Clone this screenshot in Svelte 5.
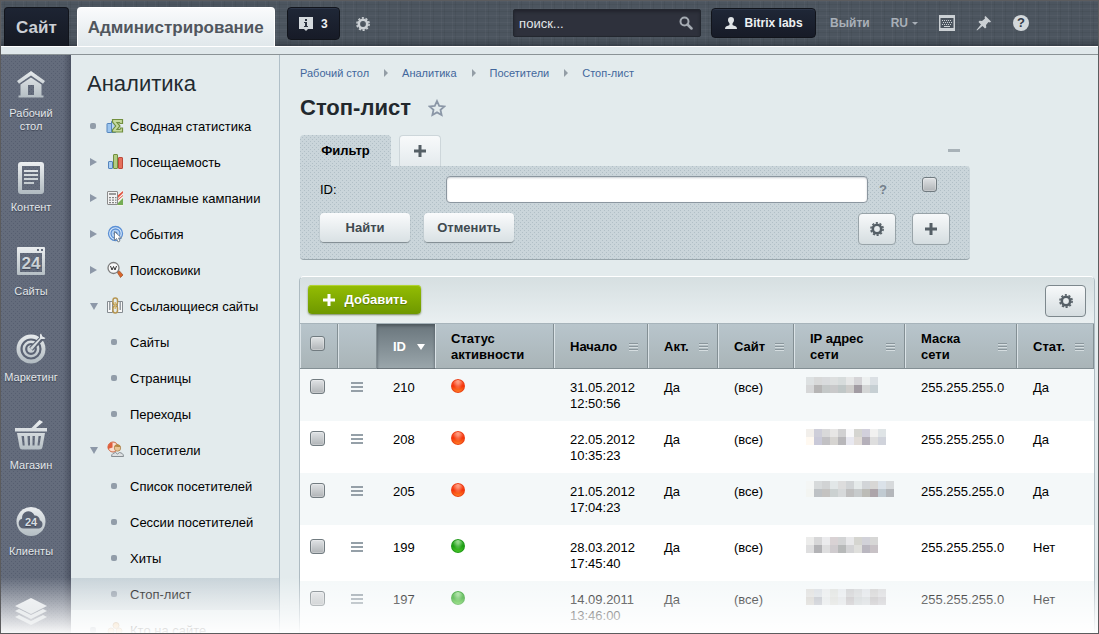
<script>
  const rail = [
    { icon: "home", label: "Рабочий стол" },
    { icon: "content", label: "Контент" },
    { icon: "sites", label: "Сайты" },
    { icon: "marketing", label: "Маркетинг" },
    { icon: "shop", label: "Магазин" },
    { icon: "clients", label: "Клиенты" },
    { icon: "apps", label: "" }
  ];

  const menu = [
    { label: "Сводная статистика", icon: "summary", mark: "dot" },
    { label: "Посещаемость", icon: "traffic", mark: "right" },
    { label: "Рекламные кампании", icon: "ads", mark: "right" },
    { label: "События", icon: "events", mark: "right" },
    { label: "Поисковики", icon: "search", mark: "right" },
    { label: "Ссылающиеся сайты", icon: "links", mark: "down" },
    { label: "Сайты", sub: true },
    { label: "Страницы", sub: true },
    { label: "Переходы", sub: true },
    { label: "Посетители", icon: "visitors", mark: "down" },
    { label: "Список посетителей", sub: true },
    { label: "Сессии посетителей", sub: true },
    { label: "Хиты", sub: true },
    { label: "Стоп-лист", sub: true, active: true },
    { label: "Кто на сайте", icon: "online", mark: "dot" }
  ];

  const crumbs = ["Рабочий стол", "Аналитика", "Посетители", "Стоп-лист"];

  const columns = [
    { title: "Начало" },
    { title: "Акт." },
    { title: "Сайт" },
    { title: "IP адрес сети" },
    { title: "Маска сети" },
    { title: "Стат." }
  ];

  // the address is hidden behind two lines of coloured squares
  const rows = [
    {
      id: 210, state: "red", date: "31.05.2012", time: "12:50:56", stat: "Да",
      ip: [
        ["#dde1e2", "#d8d9d9", "#d9dbdd", "#dddfdf", "#d7dcdc", "#e6e7e7", "#d5d4d7", "#edf0f0", "#dbe0e4"],
        ["#d6d7d8", "#b6b5b5", "#c4c8c8", "#c9c9ca", "#c0c7c7", "#cecdcb", "#a29ca3", "#d4d6d6", "#c6cfd3"]
      ]
    },
    {
      id: 208, state: "red", date: "22.05.2012", time: "10:35:23", stat: "Да",
      ip: [
        ["#f2efeb", "#ceced9", "#d9d9da", "#e7e6e5", "#d1d1d2", "#f8f8fa", "#d5d5d1", "#d2d0dc", "#f1f1f0", "#dfe4e6"],
        ["#fff9f1", "#c9c9d8", "#c2c1c4", "#d6d4d1", "#b8b7ba", "#e8e8f0", "#e1dcd8", "#b5b0ba", "#dedede", "#d0d3db"]
      ]
    },
    {
      id: 205, state: "red", date: "21.05.2012", time: "17:04:23", stat: "Да",
      ip: [
        ["#f4f6f5", "#d7dadb", "#d1d3d4", "#e2e7e8", "#dddddd", "#d1d4d6", "#e5eaea", "#d2d5d8", "#d8d7d5", "#dbe2e9", "#d7dadc"],
        ["#f3f5f2", "#bec2c5", "#c4c3c1", "#cbd1d1", "#d6d9da", "#bfbfbf", "#c7cbcc", "#bcbcb7", "#ada5aa", "#c1cbd2", "#b4b7bb"]
      ]
    },
    {
      id: 199, state: "green", date: "28.03.2012", time: "17:45:40", stat: "Нет", tall: true,
      ip: [
        ["#ececeb", "#d7d7d8", "#ebebed", "#d9d2d4", "#d3d4d5", "#e8e8ea", "#d5d5d0", "#d2d2d9", "#d7d7d6"],
        ["#dededf", "#b3b3b6", "#dededf", "#cfcbce", "#b7b9b9", "#d3d3d5", "#dfdfdc", "#bab7c0", "#c8c2c6"]
      ]
    },
    {
      id: 197, state: "green", date: "14.09.2011", time: "13:46:00", stat: "Нет",
      ip: [
        ["#dededc", "#d8dde2", "#e8ebec", "#dfe2df", "#e6eaed", "#cecfd1", "#d5d8da", "#e0e4e8", "#d2d2d2", "#dadbdd"],
        ["#d2d0cb", "#b7bbc4", "#e2e6e7", "#dadcd8", "#dde1e3", "#bfbcbf", "#cbd1d3", "#d1d6d9", "#bfbdbf", "#c9c8cc"]
      ]
    }
  ];
</script>

<svelte:head>
  <title>Стоп-лист</title>
</svelte:head>

{#snippet gear()}
  <svg class="gear" viewBox="0 0 14 14" width="14" height="14">
    <circle cx="7" cy="7" r="4.2" fill="none" stroke="currentColor" stroke-width="2.6" />
    <circle cx="7" cy="7" r="6.1" fill="none" stroke="currentColor" stroke-width="1.6" stroke-dasharray="2.1 1.73" />
  </svg>
{/snippet}

{#snippet plus()}
  <svg viewBox="0 0 14 14" width="14" height="14">
    <path d="M5.5 1h3v4.5H13v3H8.500V13h-3V8.500H1v-3h4.500z" fill="currentColor" />
  </svg>
{/snippet}

{#snippet railIcon(name)}
  <svg viewBox="0 0 32 32" width="32" height="32" fill="url(#metal)">
    {#if name === "home"}
      <path d="M2 13 16 3l14 10-2 2.800L16 7.400 4 15.800z" />
      <path fill-rule="evenodd" d="M5.500 16.500 16 9.400l10.500 7.100V27.500h2V29.500h-25v-2h2zM13 17v10h6V17z" />
    {:else if name === "content"}
      <path fill-rule="evenodd" d="M6 0h20a3 3 0 0 1 3 3v26a3 3 0 0 1-3 3H6a3 3 0 0 1-3-3V3a3 3 0 0 1 3-3zm1 4v24h18V4z" />
      <path d="M9 8h14v2H9zm0 4h14v2H9zm0 4h14v2H9zm0 4h10v2H9z" />
    {:else if name === "sites"}
      <path fill-rule="evenodd" d="M3 1h26a1 1 0 0 1 1 1v26a1 1 0 0 1-1 1H3a1 1 0 0 1-1-1V2a1 1 0 0 1 1-1zm19 2v2h2V3zm4 0v2h2V3zM5 7v19h22V7z" />
      <text x="16" y="23" text-anchor="middle" font-size="17" font-weight="700">24</text>
    {:else if name === "marketing"}
      <circle cx="16" cy="17" r="14.500" />
      <g fill="none" stroke="#5b6374" stroke-width="2.200">
        <circle cx="16" cy="17" r="9.500" />
        <circle cx="16" cy="17" r="4.800" />
        <path d="m16 17 13-13" stroke-width="5" />
      </g>
      <path d="m15 16 10-10V2.500l1-1 1.500 3 3 1.500-1 1H26L17 18z" />
    {:else if name === "shop"}
      <path d="M24.500 0 28 2l-7 6h-4.500z" />
      <path d="M0 8h32v3.500H0z" />
      <path fill-rule="evenodd" d="M2 13h28l-2.500 14a3 3 0 0 1-3 2.500h-17a3 3 0 0 1-3-2.500zm4.500 3 1.200 9.500h2L9 16zm6 0 .5 9.500h2V16zm5 0v9.500h2l.5-9.500zm6 0-1 9.500h2l1.500-9.500z" />
    {:else if name === "clients"}
      <circle cx="16" cy="15.500" r="14.500" />
      <path d="M8.500 22.500a5 5 0 0 1-1.500-9.700 6.500 6.500 0 0 1 12.500-3.300 5 5 0 0 1 5.300 4.800 4.300 4.300 0 0 1-.8 8.200z" fill="#5b6374" />
      <text x="16" y="20" text-anchor="middle" font-size="11" font-weight="700" fill="#d8dee2">24</text>
    {:else}
      <path d="m16 2 16 8-16 8-16-8z" />
      <path d="m0 15 4-2 12 6 12-6 4 2-16 8z" />
      <path d="m0 21 4-2 12 6 12-6 4 2-16 8z" />
    {/if}
  </svg>
{/snippet}

{#snippet menuIcon(name)}
  <svg viewBox="0 0 18 18" width="18" height="18">
    {#if name === "summary"}
      <rect x="1" y="6.500" width="4.500" height="9" rx=".5" fill="#9cc5ee" stroke="#5585bd" />
      <path d="M5.500 4.500h4v11h-4z" fill="#b7d4f2" stroke="#5585bd" />
      <path d="M6.500 2.500h10v4h-2.500l-.5-1H11l3 3.500-3 3.500h3l.5-1.500h2v4h-10v-2l3.200-4L6.500 5z" fill="#c6da9f" stroke="#718f3e" stroke-width="1.200" />
    {:else if name === "traffic"}
      <rect x="2.500" y="8.500" width="4" height="7" rx=".5" fill="#a9cdf1" stroke="#5585bd" />
      <rect x="7.500" y="1.500" width="4" height="14" rx=".5" fill="#b2cd83" stroke="#718f3e" />
      <rect x="12.500" y="4.500" width="4" height="11" rx=".5" fill="#e5705c" stroke="#bd4a3b" />
    {:else if name === "ads"}
      <path d="M11 6 17 1v16h-6z" fill="#f7f3ee" />
      <path d="m11 7 6-5v2l-6 6zm0 5 6-5v-1l-6 5z" fill="#de5340" />
      <path d="m11 15 6-6v7h-6z" fill="#75ad54" />
      <rect x="1.500" y="2.500" width="10" height="13" rx=".5" fill="#f3f3f3" stroke="#8b8b8b" />
      <path d="M3 4h7v2H3z" fill="#9a9a9a" />
      <path d="M3 8h2v1.300H3zm3 0h2v1.300H6zm3 0h1.500v1.300H9zm-6 2.500h2v1.300H3zm3 0h2v1.300H6zm3 0h1.500v1.300H9zM3 13h2v1.300H3zm3 0h2v1.300H6zm3 0h1.500v1.300H9z" fill="#858585" />
    {:else if name === "events"}
      <circle cx="9.500" cy="8.500" r="7" fill="#d8e9fa" stroke="#5a8fd5" stroke-width="1.300" />
      <circle cx="9.500" cy="8.500" r="4.500" fill="#b5d2f3" stroke="#5a8fd5" stroke-width="1.300" />
      <circle cx="9.500" cy="8.500" r="2" fill="#4c83ca" />
      <path d="M8.500 6.500v9l2-2 1.500 3.500 2-1-1.500-3h3z" fill="#fff" stroke="#66717c" stroke-width=".8" />
    {:else if name === "search"}
      <path d="m11 11 2-1.500 4 4.500-2.500 2.500z" fill="#d9662b" stroke="#99502b" stroke-width=".7" />
      <circle cx="7.500" cy="7" r="5.500" fill="#f8f8f8" stroke="#7d7d7d" stroke-width="1.300" />
      <path d="m4.500 5 1.500 4 1.500-3.500L9 9l1.500-4" fill="none" stroke="#333" />
    {:else if name === "links"}
      <path d="M1.500 4.500h5v11h-5zm10 0h5v11h-5z" fill="#f8f8f8" stroke="#858b90" />
      <path d="M3 5h1.500v8H3zm10.500 0H15v8h-1.500z" fill="#989ea3" />
      <rect x="7" y="1" width="4.500" height="7" rx="2.200" fill="none" stroke="#b69550" stroke-width="1.500" />
      <rect x="7" y="9" width="4.500" height="7" rx="2.200" fill="none" stroke="#b69550" stroke-width="1.500" />
      <path d="M9.200 5v7" stroke="#d5b871" stroke-width="1.500" />
    {:else if name === "visitors"}
      <circle cx="7" cy="6" r="5" fill="#f9ddd0" stroke="#cf6742" />
      <path d="M6.500 1.500v5L2 8a5 5 0 0 1 4.500-6.500z" fill="#e15f3d" />
      <circle cx="11.500" cy="7" r="3.200" fill="#e9c392" stroke="#a98150" stroke-width=".8" />
      <path d="M8.300 6a3.200 3.200 0 0 1 6.300 0c-2 .3-4-.7-6.300 0z" fill="#b48744" />
      <path d="M5.500 15.500c0-3 2.500-3.500 4-4l2 1.500 2-1.500c2 .5 4 1 4 4z" fill="#dde0e2" stroke="#868d92" />
    {:else}
      <circle cx="10" cy="4.500" r="3" fill="#e9b772" stroke="#a98150" />
      <circle cx="5" cy="10" r="3" fill="#e9b772" stroke="#a98150" />
      <circle cx="13" cy="10" r="3" fill="#e9b772" stroke="#a98150" />
      <path d="M1 16c0-3 2-3.500 4-3.500S9 13 9 16zm8 0c0-3 2-3.500 4-3.500s4 .5 4 3.500z" fill="#c9a266" />
    {/if}
  </svg>
{/snippet}

<svg class="defs" width="0" height="0" aria-hidden="true">
  <linearGradient id="metal" x1="0" y1="0" x2="0" y2="32" gradientUnits="userSpaceOnUse">
    <stop offset="0" stop-color="#eceff1" />
    <stop offset="1" stop-color="#b0bac0" />
  </linearGradient>
</svg>

<div class="page">
  <header>
    <nav class="tabs">
      <a class="tab" href="#site">Сайт</a>
      <a class="tab current" href="#admin">Администрирование</a>
    </nav>
    <button class="dark notices" aria-label="Уведомления: 3">
      <svg viewBox="0 0 14 14" width="14" height="14">
        <path d="M0 0h14v12H9l-2 2-2-2H0z" fill="#d5dade" />
        <path d="M6 2h2v2H6zM5 5h3v4h1v1H5V9h1V6H5z" fill="#2c3340" />
      </svg>
      <span>3</span>
    </button>
    <button class="plain settings" aria-label="Настройки">{@render gear()}</button>

    <div class="search">
      <input type="text" placeholder="поиск..." aria-label="Поиск" />
      <svg viewBox="0 0 14 14" width="14" height="14">
        <circle cx="5.500" cy="5.500" r="4" fill="none" stroke="#a5abb2" stroke-width="2" />
        <path d="m8.500 8.500 4 4" stroke="#a5abb2" stroke-width="2.500" stroke-linecap="round" />
      </svg>
    </div>
    <button class="dark user">
      <svg viewBox="0 0 12 12" width="12" height="12">
        <path d="M6 0c2 0 3 1.200 3 3S8 5.500 7.500 6.500c0 1.500 0 1.500 1 2 2 .5 3.500 1 3.500 3.500H0c0-2.500 1.500-3 3.500-3.500 1-.5 1-.5 1-2C4 5.500 3 4.800 3 3s1-3 3-3z" fill="#dfe3e6" />
      </svg>
      <span>Bitrix labs</span>
    </button>
    <a class="link" href="#logout">Выйти</a>
    <button class="plain link lang">RU<i></i></button>
    <button class="plain tool" aria-label="Горячие клавиши">
      <svg viewBox="0 0 16 16" width="16" height="16">
        <path fill-rule="evenodd" d="M0 0h16v16H0zm1.500 3v10h13V3z" fill="#cbd0d4" />
        <path d="M3 5.500h10M3 9.500h10" stroke="#cbd0d4" stroke-dasharray="1 1" />
        <path d="M4 7.500h9" stroke="#cbd0d4" stroke-dasharray="1 1" />
        <path d="M5 11.500h6" stroke="#cbd0d4" />
      </svg>
    </button>
    <button class="plain tool" aria-label="Закрепить">
      <svg viewBox="0 0 16 16" width="16" height="16">
        <path d="m9.500 1 5.500 5.500-1 1-1.500-.5-2.500 3 .3 2.500-1.300 1L6.500 11 1 15.500.5 15 5 9.500 2.500 7l1-1.200L6 6l3-2.500L8.500 2z" fill="#cbd0d4" />
      </svg>
    </button>
    <button class="plain tool" aria-label="Помощь">
      <span class="help">?</span>
    </button>
  </header>

  <div class="band"></div>

  <div class="body">
    <nav class="rail">
      {#each rail as item}
        <a href="#{item.icon}" aria-label={item.label || "Приложения"}>
          {@render railIcon(item.icon)}
          <span>{item.label}</span>
        </a>
      {/each}
    </nav>

    <aside>
      <h2>Аналитика</h2>
      <ul>
        {#each menu as item}
          <li class:sub={item.sub} class:active={item.active}>
            <i class={item.mark || "dot"}></i>
            {#if item.icon}{@render menuIcon(item.icon)}{/if}
            <a href="#menu">{item.label}</a>
          </li>
        {/each}
      </ul>
    </aside>

    <main>
      <nav class="crumbs">
        {#each crumbs as crumb, i}
          {#if i > 0}<i></i>{/if}
          <a href="#crumb">{crumb}</a>
        {/each}
      </nav>

      <div class="title">
        <h1>Стоп-лист</h1>
        <button class="plain" aria-label="В избранное">
          <svg viewBox="0 0 18 18" width="18" height="18">
            <path d="m9 2 2.200 4.800 5.200.6-3.900 3.500 1.100 5.100L9 13.400 4.400 16l1.100-5.100-3.900-3.500 5.200-.6z" fill="none" stroke="#8b97a7" stroke-width="1.800" />
          </svg>
        </button>
      </div>

      <section class="filter">
        <div class="filter-tabs">
          <button class="dotted">Фильтр</button>
          <button class="add" aria-label="Добавить фильтр">{@render plus()}</button>
          <button class="plain collapse" aria-label="Свернуть"><i></i></button>
        </div>
        <form class="dotted">
          <div class="field">
            <label for="filter-id">ID:</label>
            <input id="filter-id" type="text" />
            <span class="hint">?</span>
            <input type="checkbox" aria-label="Показывать поле" />
          </div>
          <div class="actions">
            <button type="button" class="text">Найти</button>
            <button type="button" class="text">Отменить</button>
            <button type="button" class="square push" aria-label="Настроить">{@render gear()}</button>
            <button type="button" class="square" aria-label="Добавить условие">{@render plus()}</button>
          </div>
        </form>
      </section>

      <section class="list">
        <div class="toolbar">
          <button class="create">{@render plus()}<span>Добавить</span></button>
          <button class="square wide" aria-label="Настроить список">{@render gear()}</button>
        </div>
        <table>
          <colgroup>
            <col class="w-check" />
            <col class="w-menu" />
            <col class="w-id" />
            <col class="w-state" />
            <col class="w-date" />
            <col class="w-act" />
            <col class="w-site" />
            <col class="w-ip" />
            <col class="w-mask" />
            <col />
          </colgroup>
          <thead>
            <tr>
              <th class="check"><input type="checkbox" aria-label="Выбрать все" /></th>
              <th></th>
              <th class="sorted"><div>ID<i></i></div></th>
              <th>Статус активности</th>
              {#each columns as column}
                <th><div>{column.title}<span class="grip"></span></div></th>
              {/each}
            </tr>
          </thead>
          <tbody>
            {#each rows as row}
              <tr class:tall={row.tall}>
                <td class="check"><input type="checkbox" aria-label="Выбрать {row.id}" /></td>
                <td class="more"><button class="plain" aria-label="Действия"><span class="bars"></span></button></td>
                <td>{row.id}</td>
                <td class="state"><span class="ball {row.state}"></span></td>
                <td>{row.date}<br />{row.time}</td>
                <td>Да</td>
                <td>(все)</td>
                <td class="ip">
                  <svg width={row.ip[0].length * 8} height="16" shape-rendering="crispEdges">
                    {#each row.ip as line, y}
                      {#each line as fill, x}
                        <rect x={x * 8} y={y * 8} width="8" height="8" {fill} />
                      {/each}
                    {/each}
                  </svg>
                </td>
                <td>255.255.255.0</td>
                <td>{row.stat}</td>
              </tr>
            {/each}
          </tbody>
        </table>
      </section>
    </main>
  </div>
  <div class="fade"></div>
</div>

<style>
  :global(body) {
    margin: 0;
    font-family: "Liberation Sans", Arial, sans-serif;
    font-size: 13px;
    color: #000;
  }

  .page {
    position: relative;
    display: flex;
    flex-direction: column;
    box-sizing: border-box;
    height: 100vh;
    overflow: hidden;
    border: 1px solid #5c5c5e;
    background: #e3ebed;
  }

  .defs {
    position: absolute;
  }

  a {
    color: inherit;
    text-decoration: none;
  }

  button {
    display: flex;
    align-items: center;
    justify-content: center;
    box-sizing: border-box;
    padding: 0;
    border: 0;
    font: inherit;
    color: inherit;
    cursor: pointer;
  }

  svg {
    display: block;
    flex: none;
  }

  .plain {
    background: none;
  }

  /* top bar */
  header {
    display: flex;
    align-items: flex-start;
    flex: none;
    height: 45px;
    padding: 6px 69px 0 3px;
    box-sizing: border-box;
    color: #a9b0b8;
    font-weight: 700;
    font-size: 12px;
    background:
      linear-gradient(transparent 85%, rgba(30, 36, 44, 0.45)),
      repeating-linear-gradient(90deg, rgba(255, 255, 255, 0.03) 0 1px, transparent 1px 3px, rgba(0, 0, 0, 0.05) 3px 4px, transparent 4px 11px),
      repeating-linear-gradient(rgba(255, 255, 255, 0.03) 0 1px, transparent 1px 3px, rgba(0, 0, 0, 0.05) 3px 4px, transparent 4px 7px),
      #4c555f;
  }

  .tabs {
    display: flex;
    gap: 8px;
  }

  .tab {
    height: 39px;
    box-sizing: border-box;
    padding: 0 11px;
    border: 1px solid #11141b;
    border-bottom: 0;
    border-radius: 4px 4px 0 0;
    background: linear-gradient(#1d2433, #151922);
    color: #ccd0d5;
    font-size: 17px;
    line-height: 39px;
  }

  .tab.current {
    padding: 0 10px;
    border-color: #fff;
    background: linear-gradient(#fafbfc, #e0e8eb);
    color: #50565d;
  }

  .dark {
    border: 1px solid #11141b;
    border-radius: 4px;
    background: linear-gradient(#1f2737, #171b27);
    box-shadow: inset 0 1px #2c3547;
    color: #eef1f3;
  }

  .notices {
    width: 53px;
    height: 33px;
    gap: 8px;
    margin-left: 12px;
  }

  .settings {
    height: 33px;
    margin-left: 16px;
    color: #ccd1d5;
  }

  .search {
    display: flex;
    align-items: center;
    width: 188px;
    height: 28px;
    box-sizing: border-box;
    margin: 2px 10px 0 auto;
    padding: 0 7px 0 5px;
    border: 1px solid #23272f;
    border-radius: 2px;
    background: #2e313c;
    box-shadow: inset 0 2px 3px #22252e;
  }

  .search input {
    flex: 1;
    min-width: 0;
    padding: 0;
    border: 0;
    outline: 0;
    background: none;
    color: #e9edef;
    font: 13px "Liberation Sans", Arial, sans-serif;
  }

  .search input::placeholder {
    color: #e3e7ea;
  }

  .user {
    width: 105px;
    height: 30px;
    margin-top: 1px;
    gap: 8px;
  }

  .link {
    height: 32px;
    margin-left: 14px;
    line-height: 32px;
  }

  .lang {
    margin-left: 21px;
    gap: 4px;
  }

  .lang i {
    border: 3px solid transparent;
    border-top-color: #a9b0b8;
    border-bottom: 0;
  }

  .tool {
    height: 32px;
    margin-left: 21px;
  }

  .help {
    width: 16px;
    height: 16px;
    border-radius: 8px;
    background: #d3d8db;
    color: #333b47;
    font-size: 13px;
    line-height: 16px;
  }

  .band {
    flex: none;
    height: 9px;
    box-sizing: border-box;
    border-top: 1px solid #fff;
    border-bottom: 1px solid #8b9396;
    background: #e0e8eb;
  }

  .body {
    display: flex;
    flex: 1;
    min-height: 0;
  }

  /* left rail */
  .rail {
    display: grid;
    grid-template-rows: 94px 84px 86px 88px 86px 90px 86px;
    flex: none;
    width: 70px;
    box-sizing: border-box;
    padding: 13px 10px 0 0;
    overflow: hidden;
    background:
      linear-gradient(90deg, transparent 62px, rgba(40, 45, 60, 0.4)),
      conic-gradient(at 1px 1px, transparent 75%, #565e70 0) 0 0 / 4px 4px,
      conic-gradient(at 1px 1px, transparent 75%, #565e70 0) 2px 2px / 4px 4px,
      #646c7c;
  }

  .rail a {
    display: flex;
    flex-direction: column;
    align-items: center;
    gap: 7px;
    color: #e3e7ea;
    font-size: 11px;
    line-height: 13px;
    text-align: center;
    text-shadow: 0 1px 1px #3a4050;
  }

  /* menu */
  aside {
    flex: none;
    width: 208px;
    border-right: 1px solid #b0bfc8;
    overflow: hidden;
  }

  h2 {
    margin: 0;
    padding: 16px 16px 13px;
    color: #222a30;
    font-size: 22px;
    font-weight: 400;
    line-height: 26px;
  }

  ul {
    margin: 0;
    padding: 0;
    list-style: none;
  }

  li {
    display: grid;
    grid-template-columns: 10px 18px auto;
    gap: 6px;
    align-items: center;
    height: 32px;
    margin-bottom: 4px;
    padding-left: 19px;
    white-space: nowrap;
  }

  li i {
    width: 6px;
    height: 6px;
    border-radius: 2px;
    background: #929da9;
  }

  li i.right,
  li i.down {
    width: 0;
    height: 0;
    border: 4px solid transparent;
    border-left: 7px solid #8d98a8;
    border-right: 0;
    border-radius: 0;
    background: none;
  }

  li i.down {
    border: 4px solid transparent;
    border-top: 7px solid #8d98a8;
    border-bottom: 0;
  }

  .sub {
    grid-template-columns: 13px auto;
    padding-left: 40px;
  }

  .active {
    background: linear-gradient(#c8d3d9, #d0dade);
  }

  /* content */
  main {
    flex: 1;
    min-width: 0;
    padding: 10px 3px 0 20px;
  }

  .crumbs {
    display: flex;
    align-items: center;
    height: 16px;
    color: #42679c;
    font-size: 11px;
  }

  .crumbs i {
    margin: 0 14px 0 15px;
    border: 4px solid transparent;
    border-left: 4px solid #939da6;
    border-right: 0;
  }

  .title {
    display: flex;
    align-items: center;
    gap: 17px;
    height: 54px;
    color: #22282d;
  }

  h1 {
    margin: 0;
    font-size: 22px;
    line-height: 26px;
  }

  .filter {
    max-width: 670px;
  }

  .filter-tabs {
    display: flex;
    align-items: flex-end;
    gap: 8px;
  }

  .filter-tabs button {
    height: 31px;
    border-radius: 4px 4px 0 0;
    font-weight: 700;
  }

  .filter-tabs .dotted {
    width: 91px;
  }

  .filter-tabs .add {
    width: 42px;
    border: 1px solid #cdd6da;
    border-bottom: 0;
    background: linear-gradient(#f8fafb, #e4eaed);
    color: #555f66;
  }

  .filter-tabs .collapse {
    margin: 0 10px 0 auto;
  }

  .collapse i {
    width: 12px;
    height: 3px;
    background: #a8b2b8;
  }

  .dotted {
    background:
      conic-gradient(at 1px 1px, transparent 75%, #b1bfc6 0) 0 0 / 4px 4px,
      conic-gradient(at 1px 1px, transparent 75%, #b1bfc6 0) 2px 2px / 4px 4px,
      #cad5da;
  }

  form {
    padding: 10px 20px 14px;
    border-bottom: 1px solid #98a5ab;
    border-radius: 0 4px 4px 4px;
  }

  .field {
    display: flex;
    align-items: center;
    margin-bottom: 10px;
  }

  .field label {
    width: 126px;
  }

  .field input[type="text"] {
    flex: 1;
    min-width: 0;
    height: 27px;
    box-sizing: border-box;
    border: 1px solid #8b969f;
    border-radius: 4px;
    background: #fff;
    box-shadow: inset 0 1px 2px #c9ced2;
    font: inherit;
  }

  .hint {
    margin: 0 35px 0 11px;
    color: #74808a;
    font-weight: 700;
  }

  input[type="checkbox"] {
    display: block;
    appearance: none;
    width: 15px;
    height: 15px;
    box-sizing: border-box;
    margin: 0;
    border: 1px solid #717b80;
    border-radius: 3px;
    background: linear-gradient(#e0e3e5, #b0b4b7);
    box-shadow: inset 0 0 0 1px rgba(255, 255, 255, 0.25);
  }

  .field input[type="checkbox"] {
    margin: 0 13px 10px 0;
  }

  .actions {
    display: flex;
    gap: 14px;
  }

  .text {
    width: 90px;
    height: 29px;
    border-radius: 4px;
    background: linear-gradient(#fafbfc, #d9e1e4);
    box-shadow: 0 1px 1px #7e898e;
    color: #3f4a50;
    font-weight: 700;
  }

  .square {
    width: 38px;
    height: 32px;
    border: 1px solid #98a3a8;
    border-radius: 4px;
    background: linear-gradient(#f7f9fa, #d5dde0);
    color: #555f66;
  }

  .push {
    margin: 0 2px 0 auto;
  }

  .list {
    margin: 16px 0 0 -1px;
    border: 1px solid #aebbc2;
    border-top-color: #fff;
    border-radius: 5px 5px 0 0;
  }

  .toolbar {
    display: flex;
    justify-content: space-between;
    height: 47px;
    box-sizing: border-box;
    padding: 8px 8px 0;
    border-bottom: 1px solid #a7b4bb;
    border-radius: 4px 4px 0 0;
    background: linear-gradient(#d6dfe1, #e9eff1);
  }

  .create {
    width: 113px;
    height: 29px;
    gap: 9px;
    border-radius: 4px;
    background: linear-gradient(#94bd03, #6e9800);
    box-shadow: inset 0 1px #b3d432, 0 1px 2px #7a8a60;
    color: #fff;
    font-weight: 700;
    text-shadow: 0 1px 1px #557500;
  }

  .wide {
    width: 41px;
    border-color: #7d888d;
  }

  table {
    width: 100%;
    table-layout: fixed;
    border-collapse: separate;
    border-spacing: 0;
    line-height: 16px;
  }

  .w-check { width: 38px; }
  .w-menu { width: 39px; }
  .w-id { width: 58px; }
  .w-state { width: 119px; }
  .w-date { width: 94px; }
  .w-act { width: 70px; }
  .w-site { width: 76px; }
  .w-ip { width: 111px; }
  .w-mask { width: 112px; }

  th {
    height: 45px;
    box-sizing: border-box;
    padding: 0 10px 0 16px;
    background: linear-gradient(#b8c5cc, #a9b4b7);
    box-shadow: inset -1px -1px #838f94, inset 1px 0 #dbe3e7;
    text-align: left;
  }

  th div {
    display: flex;
    align-items: center;
    justify-content: space-between;
    gap: 8px;
  }

  th.sorted {
    background: linear-gradient(#69757c, #9ba7ac);
    box-shadow: inset 0 2px 3px #4d575e, inset 0 -1px #6f7a80;
    color: #fff;
  }

  .sorted i {
    border: 4px solid transparent;
    border-top: 6px solid #fff;
    border-bottom: 0;
  }

  .grip {
    width: 9px;
    height: 8px;
    flex: none;
    background: repeating-linear-gradient(#8a969c 0 1px, #d5dde0 1px 2px, transparent 2px 3px);
  }

  td {
    height: 52px;
    box-sizing: border-box;
    padding: 11px 0 0 16px;
    vertical-align: top;
  }

  tbody tr {
    background: #fff;
  }

  tbody tr:nth-child(odd) {
    background: #f4f8f9;
  }

  .tall td {
    height: 56px;
    border-top: 4px solid #fff;
  }

  th.check,
  td.check {
    padding: 10px 0 0 10px;
  }

  th.check {
    padding: 0 0 7px 10px;
  }

  td.more {
    padding: 13px 0 0 13px;
  }

  .bars {
    width: 12px;
    height: 10px;
    background: repeating-linear-gradient(#95a0a8 0 2px, transparent 2px 4px);
  }

  td.ip {
    padding: 8px 0 0 12px;
  }

  td.state {
    padding-top: 10px;
  }

  .ball {
    display: block;
    width: 14px;
    height: 14px;
    border-radius: 7px;
  }

  .red {
    background:
      radial-gradient(ellipse at 50% 20%, rgba(255, 200, 180, 0.6) 0 10%, transparent 50%),
      linear-gradient(#ff6a45, #f53308 50%, #ff8a2a);
    box-shadow: inset 0 0 0 1px #ea3e17;
  }

  .green {
    background:
      radial-gradient(ellipse at 50% 20%, rgba(200, 240, 190, 0.6) 0 10%, transparent 50%),
      linear-gradient(#4fbc45, #1c9e12 50%, #4fcc2a);
    box-shadow: inset 0 0 0 1px #1e961a;
  }

  .fade {
    position: absolute;
    right: 0;
    bottom: 0;
    left: 0;
    height: 56px;
    background: linear-gradient(rgba(255, 255, 255, 0), rgba(255, 255, 255, 0.95));
    pointer-events: none;
  }
</style>
